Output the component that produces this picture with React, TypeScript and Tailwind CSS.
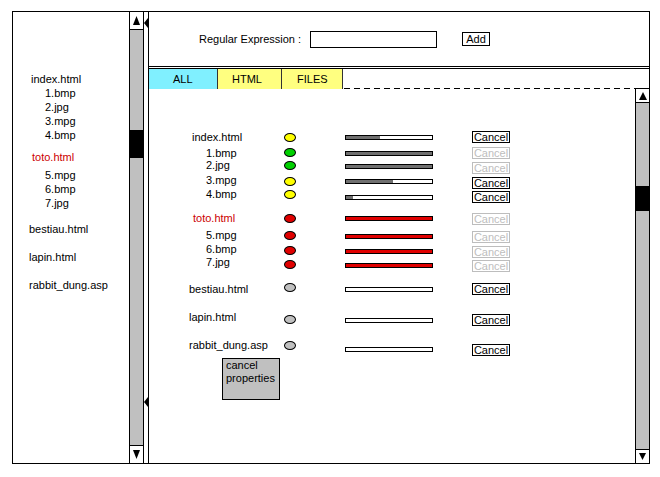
import React from 'react';

type Row = {
  name: string;
  pad: string;
  rowMt: string;
  textMt: string;
  red?: boolean;
  dot: string;
  dotMt: string;
  fill: string;
  cancelMt: string;
  enabled: boolean;
};

const leftItems = [
  { name: 'index.html', cls: 'pl-[18px]' },
  { name: '1.bmp', cls: 'pl-[32px]' },
  { name: '2.jpg', cls: 'pl-[32px]' },
  { name: '3.mpg', cls: 'pl-[32px]' },
  { name: '4.bmp', cls: 'pl-[32px]' },
  { name: 'toto.html', cls: 'pl-[19px] mt-[8px] text-[#cc0000]' },
  { name: '5.mpg', cls: 'pl-[32px] mt-[4px]' },
  { name: '6.bmp', cls: 'pl-[32px]' },
  { name: '7.jpg', cls: 'pl-[32px]' },
  { name: 'bestiau.html', cls: 'pl-[16px] mt-[12px]' },
  { name: 'lapin.html', cls: 'pl-[16px] mt-[14px]' },
  { name: 'rabbit_dung.asp', cls: 'pl-[16px] mt-[14px]' },
];

const YELLOW = 'bg-[#ffff00]';
const GREEN = 'bg-[#00d000]';
const RED = 'bg-[#e00000]';
const GREY = 'bg-[#c0c0c0]';

const rows: Row[] = [
  { name: 'index.html', pad: 'pl-[3px]', rowMt: 'mt-0', textMt: 'mt-0', dot: YELLOW, dotMt: 'mt-[3px]', fill: 'w-[34px] bg-[#707070]', cancelMt: 'mt-[1px]', enabled: true },
  { name: '1.bmp', pad: 'pl-[17px]', rowMt: 'mt-[2px]', textMt: 'mt-0', dot: GREEN, dotMt: 'mt-[2px]', fill: 'w-full bg-[#707070]', cancelMt: 'mt-[1px]', enabled: false },
  { name: '2.jpg', pad: 'pl-[17px]', rowMt: '-mt-px', textMt: '-mt-px', dot: GREEN, dotMt: 'mt-[2px]', fill: 'w-full bg-[#707070]', cancelMt: 'mt-[3px]', enabled: false },
  { name: '3.mpg', pad: 'pl-[17px]', rowMt: 'mt-[1px]', textMt: '-mt-px', dot: YELLOW, dotMt: 'mt-[3px]', fill: 'w-[47px] bg-[#707070]', cancelMt: 'mt-[3px]', enabled: true },
  { name: '4.bmp', pad: 'pl-[17px]', rowMt: 'mt-[2px]', textMt: '-mt-[3px]', dot: YELLOW, dotMt: 'mt-0', fill: 'w-[7px] bg-[#707070]', cancelMt: 'mt-[1px]', enabled: true },
  { name: 'toto.html', pad: 'pl-[4px]', rowMt: 'mt-[7px]', textMt: 'mt-0', red: true, dot: RED, dotMt: 'mt-[3px]', fill: 'w-full bg-[#e00000]', cancelMt: 'mt-[2px]', enabled: false },
  { name: '5.mpg', pad: 'pl-[17px]', rowMt: 'mt-[4px]', textMt: '-mt-px', dot: RED, dotMt: 'mt-[2px]', fill: 'w-full bg-[#e00000]', cancelMt: 'mt-[2px]', enabled: false },
  { name: '6.bmp', pad: 'pl-[17px]', rowMt: 'mt-[1px]', textMt: '-mt-[2px]', dot: RED, dotMt: 'mt-[2px]', fill: 'w-full bg-[#e00000]', cancelMt: 'mt-[2px]', enabled: false },
  { name: '7.jpg', pad: 'pl-[17px]', rowMt: 'mt-0', textMt: '-mt-[3px]', dot: RED, dotMt: 'mt-[2px]', fill: 'w-full bg-[#e00000]', cancelMt: 'mt-[2px]', enabled: false },
  { name: 'bestiau.html', pad: 'pl-0', rowMt: 'mt-[10px]', textMt: 'mt-0', dot: GREY, dotMt: 'mt-[1px]', fill: 'w-0', cancelMt: 'mt-[1px]', enabled: true },
  { name: 'lapin.html', pad: 'pl-0', rowMt: 'mt-[17px]', textMt: '-mt-[3px]', dot: GREY, dotMt: 'mt-[2px]', fill: 'w-0', cancelMt: 'mt-[1px]', enabled: true },
  { name: 'rabbit_dung.asp', pad: 'pl-0', rowMt: 'mt-[15px]', textMt: '-mt-[4px]', dot: GREY, dotMt: '-mt-px', fill: 'w-0', cancelMt: 'mt-[2px]', enabled: true },
];

const tabs = [
  { label: 'ALL', cls: 'w-[69px] pl-[24px] bg-[#80f0ff]' },
  { label: 'HTML', cls: 'w-[64px] pl-[14px] bg-[#ffff80]' },
  { label: 'FILES', cls: 'w-[61px] pl-[15px] bg-[#ffff80]' },
];

const Up = ({ w, h }: { w: number; h: number }) => (
  <svg width={w} height={h} viewBox={`0 0 ${w} ${h}`}>
    <polygon points={`${w / 2},0 ${w},${h} 0,${h}`} fill="#000" />
  </svg>
);

const Down = ({ w, h }: { w: number; h: number }) => (
  <svg width={w} height={h} viewBox={`0 0 ${w} ${h}`}>
    <polygon points={`0,0 ${w},0 ${w / 2},${h}`} fill="#000" />
  </svg>
);

const LeftTri = ({ cls }: { cls: string }) => (
  <div className={`w-0 h-0 border-y-[5px] border-y-transparent border-r-[4px] border-r-black ${cls}`} />
);

export default function App() {
  return (
    <div className="w-[660px] h-[477px] overflow-hidden bg-white text-black text-[11px] leading-[14px] font-['Liberation_Sans',Arial,sans-serif] pt-[11px] pl-[12px]">
      <div className="w-[638px] h-[453px] border border-black flex">
        {/* file tree */}
        <div className="w-[116px] shrink-0 flex flex-col pt-[60px]">
          {leftItems.map((it) => (
            <div key={it.name} className={`h-[14px] whitespace-nowrap ${it.cls}`}>
              {it.name}
            </div>
          ))}
        </div>

        {/* left scrollbar */}
        <div className="w-[15px] shrink-0 border-x border-black bg-[#c0c0c0] flex flex-col">
          <div className="h-[18px] bg-white border-b border-black flex items-center justify-center">
            <Up w={7} h={9} />
          </div>
          <div className="flex-1">
            <div className="mt-[100px] h-[28px] bg-black" />
          </div>
          <div className="h-[18px] bg-white border-t border-black flex items-center justify-center">
            <Down w={7} h={9} />
          </div>
        </div>

        {/* splitter */}
        <div className="w-[4px] shrink-0 flex flex-col">
          <LeftTri cls="mt-[6px]" />
          <LeftTri cls="mt-[369px]" />
        </div>

        {/* main panel */}
        <div className="flex-1 border-l border-black flex flex-col">
          <div className="h-[57px] shrink-0 border-b-[3px] border-double border-black flex items-start pt-[19px] pl-[50px]">
            <div className="w-[111px] leading-[17px] whitespace-nowrap">Regular Expression :</div>
            <div className="w-[127px] h-[17px] border border-black bg-white" />
            <div className="ml-[25px] mt-[1px] w-[28px] h-[14px] border border-black flex items-center justify-center leading-[12px]">
              Add
            </div>
          </div>

          <div className="h-[20px] shrink-0 flex">
            {tabs.map((t) => (
              <div key={t.label} className={`h-full border-r border-[#333] flex items-center ${t.cls}`}>
                {t.label}
              </div>
            ))}
            <div className="flex-1 self-end h-px bg-[repeating-linear-gradient(90deg,transparent_0,transparent_1px,#000_1px,#000_7px,transparent_7px,transparent_10px)]" />
            <div className="w-[14px] self-end h-px bg-black" />
          </div>

          <div className="flex-1 flex">
            <div className="flex-1 flex flex-col pt-[41px] pl-[40px]">
              {rows.map((r) => (
                <div key={r.name} className={`h-[14px] flex items-start ${r.rowMt}`}>
                  <div className={`w-[95px] shrink-0 h-[14px] whitespace-nowrap ${r.pad} ${r.textMt} ${r.red ? 'text-[#cc0000]' : ''}`}>
                    {r.name}
                  </div>
                  <div className={`w-[12px] h-[9px] shrink-0 rounded-[50%] border border-black ${r.dot} ${r.dotMt}`} />
                  <div className="ml-[49px] mt-[5px] w-[88px] h-[5px] shrink-0 border border-black bg-white">
                    <div className={`h-full ${r.fill}`} />
                  </div>
                  <div
                    className={`ml-[39px] w-[38px] h-[12px] shrink-0 border flex items-center justify-center leading-[10px] ${r.cancelMt} ${
                      r.enabled ? 'border-black text-black' : 'border-[#bdbdbd] text-[#bdbdbd]'
                    }`}
                  >
                    Cancel
                  </div>
                </div>
              ))}

              <div className="mt-[2px] ml-[33px] w-[58px] h-[42px] border border-black bg-[#c0c0c0] pl-[3px] leading-[13px]">
                <div>cancel</div>
                <div>properties</div>
              </div>
            </div>

            {/* right scrollbar */}
            <div className="w-[14px] shrink-0 border-l border-black bg-[#c0c0c0] flex flex-col">
              <div className="h-[14px] bg-white border-b border-black flex items-center justify-center">
                <Up w={8} h={8} />
              </div>
              <div className="flex-1">
                <div className="mt-[83px] h-[25px] bg-black" />
              </div>
              <div className="h-[14px] bg-white border-t border-black flex items-center justify-center">
                <Down w={7} h={7} />
              </div>
            </div>
          </div>
        </div>
      </div>
    </div>
  );
}
